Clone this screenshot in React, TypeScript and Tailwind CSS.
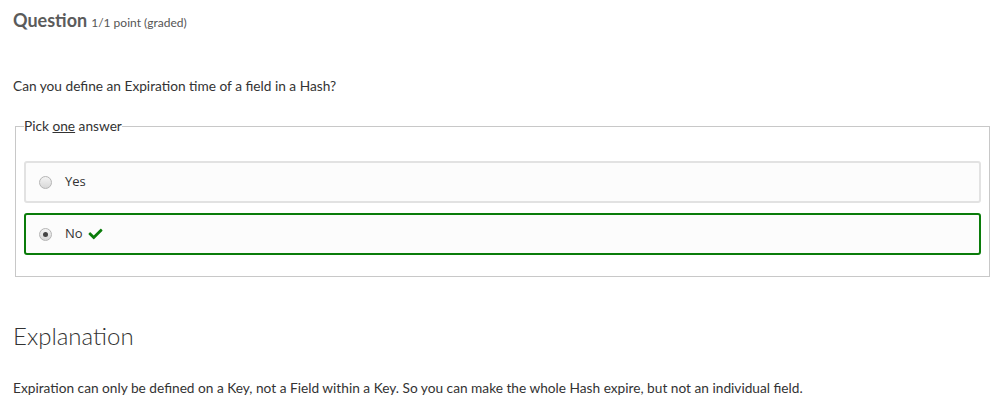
import React from 'react';
import { FaCheck } from 'react-icons/fa';

const answers = [
  { label: 'Yes', checked: false },
  { label: 'No', checked: true },
];

function Radio({ checked }: { checked: boolean }) {
  return (
    <span className="relative inline-flex h-[13px] w-[13px] items-center justify-center rounded-full border border-[#b5b5b5] bg-gradient-to-b from-[#f4f4f4] to-[#d8d8d8]">
      {checked && <span className="h-[5px] w-[5px] rounded-full bg-[#444]" />}
    </span>
  );
}

export default function App() {
  return (
    <div className="min-h-[415px] w-[1006px] bg-white px-[13px] font-['Lato','Liberation_Sans',sans-serif] text-[#333]">
      {/* Header */}
      <div className="flex items-baseline gap-[4px] pt-[8px]">
        <h3 className="text-[18px] font-bold leading-[24px] text-[#5b5b5b]">Question</h3>
        <span className="text-[12px] text-[#555]">1/1 point (graded)</span>
      </div>

      <p className="mt-[45px] text-[13.7px] leading-[18px]">Can you define an Expiration time of a field in a Hash?</p>

      {/* Answers */}
      <fieldset className="mx-[2px] mt-[22px] mr-[3px] border border-[#c8c8c8] px-[8px] pb-[21px]">
        <legend className="p-0 text-[13.7px] leading-[18px] text-[#333]">
          Pick <span className="underline">one</span> answer
        </legend>
        <div className="mt-[26px] flex flex-col gap-[10px]">
          {answers.map((a) => (
            <label
              key={a.label}
              className={
                a.checked
                  ? 'flex h-[42px] items-center gap-[13px] rounded-[3px] border-2 border-[#0a7c0a] bg-[#fcfcfc] pl-[13px] font-["Open_Sans",sans-serif] text-[13px] text-[#333]'
                  : 'flex h-[42px] items-center gap-[13px] rounded-[3px] border-2 border-[#e2e2e2] bg-[#fcfcfc] pl-[13px] font-["Open_Sans",sans-serif] text-[13px] text-[#333]'
              }
            >
              <Radio checked={a.checked} />
              <span className="flex items-center gap-[5px]">
                {a.label}
                {a.checked && <FaCheck className="h-[14px] w-[15px] text-[#0a7c0a]" />}
              </span>
            </label>
          ))}
        </div>
      </fieldset>

      {/* Explanation */}
      <h2 className="mt-[43px] text-[24px] font-light leading-[32px] text-[#333]">Explanation</h2>
      <p className="mt-[27px] text-[13.7px] leading-[18px]">
        Expiration can only be defined on a Key, not a Field within a Key. So you can make the whole Hash expire, but not an individual field.
      </p>
    </div>
  );
}
